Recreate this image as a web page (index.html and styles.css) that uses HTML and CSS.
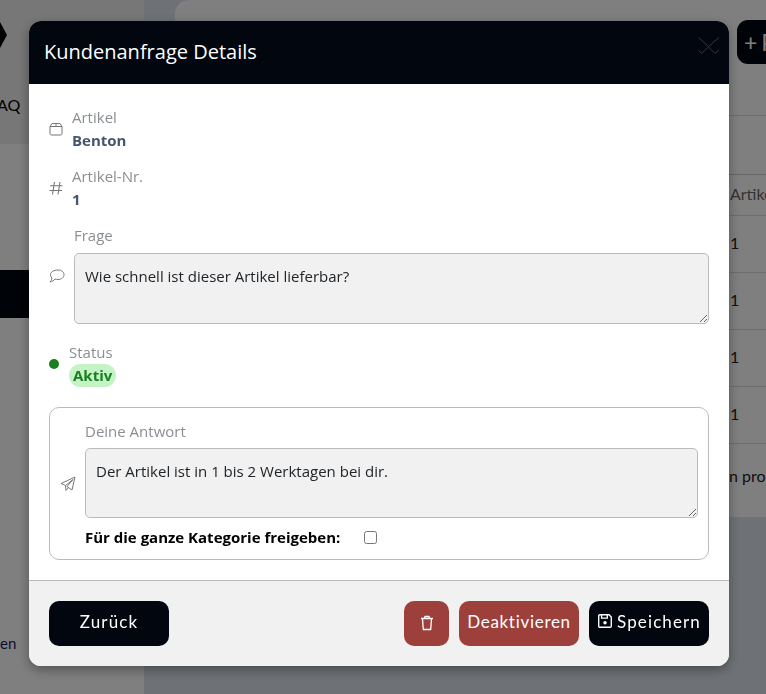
FILE: index.html
```html
<!DOCTYPE html>
<html lang="de">
<head>
<meta charset="utf-8">
<title>Kundenanfrage Details</title>
<link rel="stylesheet" href="styles.css">
</head>
<body>
<div class="page">
  <aside class="sidebar">
    <div class="side-top">
      <svg class="logo" width="7" height="26" viewBox="0 0 7 26"><path d="M0 0L7 13L0 26Z" fill="#000"/></svg>
      <span class="faq">AQ</span>
    </div>
    <div class="side-active"></div>
    <span class="side-link">en</span>
  </aside>
  <main class="main">
    <section class="card">
      <div class="row-top"><button class="add-btn">+ P</button></div>
      <div class="table">
        <div class="t-row t-first"></div>
        <div class="t-row t-head">Artikel</div>
        <div class="t-row">1</div>
        <div class="t-row">1</div>
        <div class="t-row">1</div>
        <div class="t-row">1</div>
        <div class="t-foot">n pro</div>
      </div>
    </section>
  </main>
</div>
<div class="backdrop"></div>
<div class="modal">
  <header class="m-head">
    <h1>Kundenanfrage Details</h1>
    <svg class="close" width="22" height="18" viewBox="0 0 22 18"><path d="M.5 .5L10.500 9.500L21 .5M.5 13L3.500 16.500L10.500 10L17 16.500L21 13" fill="none" stroke="#33373f" stroke-width="1"/></svg>
  </header>
  <div class="m-body">
    <div class="info">
      <svg class="ico" width="14" height="14" viewBox="0 0 14 14"><path d="M3 1.500H11L13 4.500V11.500A1.500 1.500 0 0 1 11.500 13H2.500A1.500 1.500 0 0 1 1 11.500V4.500ZM1 4.500H13M7 1.500V4.500" fill="none" stroke="#777" stroke-width="1"/></svg>
      <div><div class="label">Artikel</div><div class="value">Benton</div></div>
    </div>
    <div class="info">
      <svg class="ico" width="14" height="14" viewBox="0 0 14 14"><path d="M5.500 1L3.500 13.500M11 1L9 13.500M1 4.800H13.500M.5 9.500H13" fill="none" stroke="#777" stroke-width="1.100"/></svg>
      <div><div class="label">Artikel-Nr.</div><div class="value">1</div></div>
    </div>
    <div class="info field">
      <svg class="ico bubble" width="16" height="14" viewBox="0 0 16 14"><path d="M9 1C12.500 1 15 3 15 5.700C15 8.400 12.500 10.500 9 10.500C8 10.500 7 10.300 6 10C4.800 11.700 3 12.800 1 12.800C2 12 3 10.500 2.900 9C2 8 1.500 7 1.500 5.700C1.500 3 5 1 9 1Z" fill="none" stroke="#777" stroke-width="1"/></svg>
      <div class="grow">
        <div class="label">Frage</div>
        <textarea class="ta ta-q" readonly>Wie schnell ist dieser Artikel lieferbar?</textarea>
      </div>
    </div>
    <div class="info status">
      <span class="dot"></span>
      <div><div class="label status-label">Status</div><span class="badge">Aktiv</span></div>
    </div>
    <div class="answer">
      <svg class="ico" width="16" height="16" viewBox="0 0 16 16"><path d="M15 1L1 7.500L5.500 9.500L13 3.500L7 10.500L12 14ZM5.500 9.500L6 14.500L8.500 11.500" fill="none" stroke="#777" stroke-width="1" stroke-linejoin="round"/></svg>
      <div class="grow">
        <div class="label">Deine Antwort</div>
        <textarea class="ta ta-a">Der Artikel ist in 1 bis 2 Werktagen bei dir.</textarea>
        <label class="share"><span>Für die ganze Kategorie freigeben:</span><input type="checkbox"></label>
      </div>
    </div>
  </div>
  <footer class="m-foot">
    <button class="btn dark wide">Zurück</button>
    <div class="actions">
      <button class="btn red square" aria-label="Löschen"><svg width="14" height="16" viewBox="0 0 14 16"><path d="M1 3.500H13M4.500 3.500L5 1.500H9L9.500 3.500M2.500 3.500L3.300 14.500H10.700L11.500 3.500" fill="none" stroke="#fff" stroke-width="1.300" stroke-linejoin="round"/></svg></button>
      <button class="btn red wide">Deaktivieren</button>
      <button class="btn dark wide"><svg width="16" height="16" viewBox="0 0 14 14"><path d="M1.500 2.500A1 1 0 0 1 2.500 1.500H10.500L12.500 3.500V11.500A1 1 0 0 1 11.500 12.500H2.500A1 1 0 0 1 1.500 11.500ZM4 1.500V4.500H9V1.500" fill="none" stroke="#fff" stroke-width="1.200"/><circle cx="7" cy="8.500" r="1.500" fill="#fff"/></svg>Speichern</button>
    </div>
  </footer>
</div>
</body>
</html>
```
FILE: styles.css
```css
* { box-sizing: border-box; }
html, body { margin: 0; height: 694px; overflow: hidden; }
body { font-family: "Open Sans", sans-serif; font-size: 15px; color: #212529; }

.page { display: flex; height: 694px; background: #dde5ec; overflow: hidden; }
.sidebar { width: 144px; flex: none; background: #fff; display: flex; flex-direction: column; overflow: hidden; }
.side-top { height: 144px; background: #eee; padding-top: 22px; display: flex; flex-direction: column; gap: 47px; }
.logo { display: block; }
.faq { font-size: 16px; color: #000; margin-left: -3px; font-family: "Lato", sans-serif; }
.side-active { height: 48px; margin-top: 126px; background: #01060f; }
.side-link { margin-top: auto; margin-bottom: 42px; color: #1a1a66; font-family: "Lato", sans-serif; font-size: 15px; }

.main { flex: 1; padding-left: 31px; min-width: 0; }
.card { height: 517px; background: #fff; border-radius: 14px 0 0 14px; display: flex; flex-direction: column; overflow: hidden; }
.row-top { height: 116px; flex: none; padding: 20px 0 0 562px; border-bottom: 1px solid #ddd; }
.add-btn { width: 60px; height: 44px; background: #01060f; color: #fff; border: 0; border-radius: 11px; font-family: "Lato", sans-serif; font-size: 23px; text-align: left; padding: 0 7px; white-space: nowrap; word-spacing: -2px; }
.table { font-family: "Lato", sans-serif; font-size: 16px; color: #222; white-space: nowrap; }
.t-row { height: 57px; padding: 0 0 3px 555px; display: flex; align-items: center; border-bottom: 1px solid #ddd; }
.t-first { height: 59px; border-bottom: 1px solid #ccc; }
.t-head { height: 41px; color: #666; }
.t-foot { padding: 22px 0 0 554px; }

.backdrop { position: fixed; inset: 0; background: rgba(0, 0, 0, .5); }

.modal { position: fixed; top: 21px; left: 29px; width: 700px; height: 645px; border-radius: 12px; background: #fff; overflow: hidden; box-shadow: 0 4px 12px rgba(0, 0, 0, .35); display: flex; flex-direction: column; }
.m-head { height: 63px; flex: none; background: #01060f; color: #fff; display: flex; align-items: center; justify-content: space-between; padding: 0 9px 2px 15px; }
.m-head h1 { margin: 0; font-size: 20px; font-weight: 400; }
.close { margin-bottom: 11px; }

.m-body { flex: 1; padding: 21px 20px 0; display: flex; flex-direction: column; }
.info { display: flex; align-items: center; gap: 9px; margin-bottom: 12px; }
.ico { flex: none; }
.bubble { margin-top: 5px; }
.grow { flex: 1; min-width: 0; }
.label { color: #8a8f94; font-size: 15px; line-height: 24px; }
.value { color: #45576a; font-weight: 700; font-size: 15px; line-height: 23px; }
.field { margin-bottom: 17px; }
.ta { display: block; width: 100%; background: #f1f1f1; border: 1px solid #bbb; border-radius: 5px; font-family: inherit; font-size: 15px; line-height: 24px; color: #212529; padding: 10px; outline: 0; }
.ta-q { height: 71px; margin-top: 6px; }
.ta-a { height: 70px; margin-top: 5px; }
.status { gap: 10px; margin-bottom: 20px; }
.status-label { line-height: 23px; }
.dot { width: 10px; height: 10px; border-radius: 50%; background: #1a801f; flex: none; }
.badge { display: block; width: fit-content; background: #c5f3c5; color: #1a801f; font-weight: 700; font-size: 15px; line-height: 23px; padding: 0 4px; border-radius: 12px; }
.answer { height: 153px; flex: none; border: 1px solid #bbb; border-radius: 10px; padding: 11px 10px; display: flex; align-items: center; gap: 9px; }
.answer .grow { align-self: flex-start; }
.share { display: flex; align-items: center; gap: 24px; font-weight: 700; color: #000; margin-top: 8px; line-height: 22px; }
.share input { width: 13px; height: 13px; margin: 0; }

.m-foot { height: 86px; flex: none; background: #f1f1f1; border-top: 1px solid #bbb; padding: 20px 20px 0; display: flex; justify-content: space-between; align-items: flex-start; }
.actions { display: flex; gap: 10px; }
.btn { height: 45px; border: 0; border-radius: 10px; color: #fff; font-family: "Lato", sans-serif; font-size: 17px; letter-spacing: .7px; display: flex; align-items: center; justify-content: center; gap: 4px; padding: 0 0 5px; }
.dark { background: #01060f; letter-spacing: 1.1px; }
.red { background: #9d403c; }
.wide { width: 120px; }
.square { width: 45px; padding: 0 0 2px; }
```
